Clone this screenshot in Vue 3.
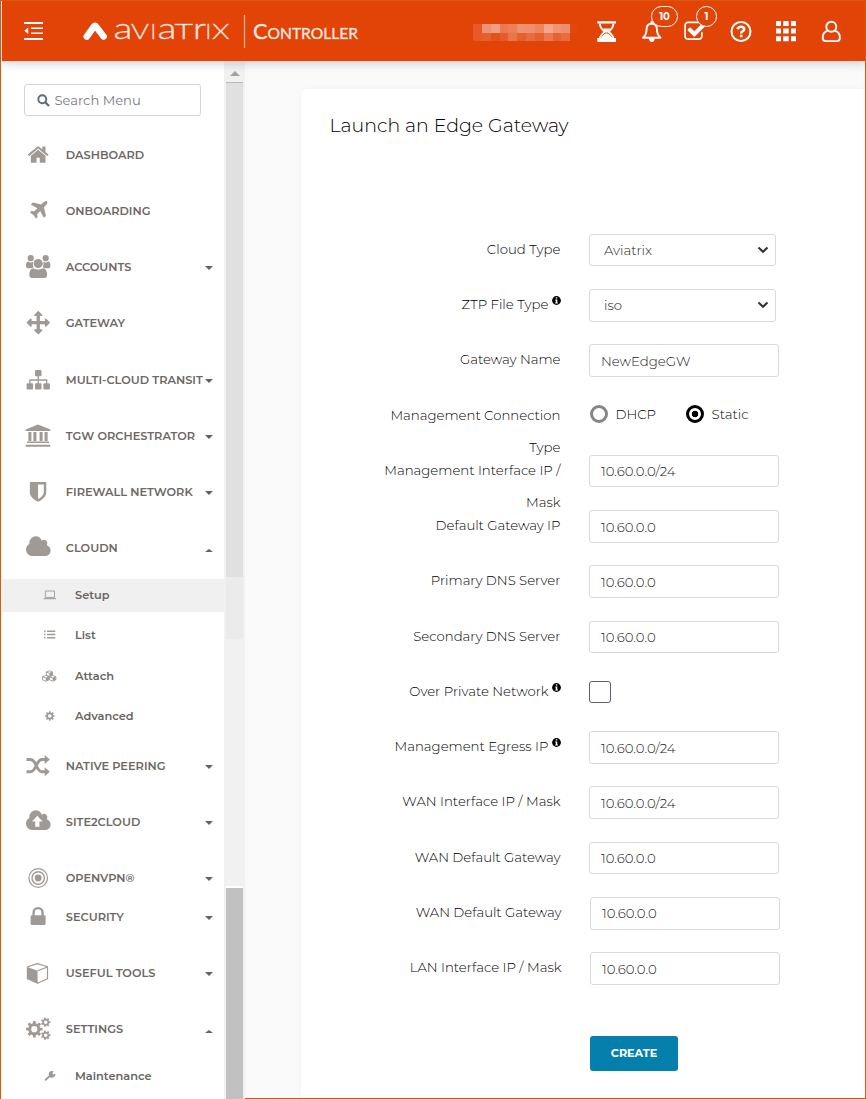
<script setup>
function gear(cx, cy, outer, inner, hole, teeth) {
  const pts = []
  const step = (Math.PI * 2) / teeth
  for (let i = 0; i < teeth; i++) {
    const a = i * step
    for (const [o, r] of [[-0.3, inner], [-0.21, outer], [0.21, outer], [0.3, inner]]) {
      const t = a + o * step
      pts.push(`${(cx + r * Math.cos(t)).toFixed(2)} ${(cy + r * Math.sin(t)).toFixed(2)}`)
    }
  }
  return `<path fill-rule="evenodd" d="M${pts.join('L')}ZM${cx - hole} ${cy}a${hole} ${hole} 0 1 0 ${hole * 2} 0a${hole} ${hole} 0 1 0 ${-hole * 2} 0Z"/>`
}

const cloudPath = '<path transform="translate(-.8 -1.600) scale(.0128 .014)" d="M1984 1152q0 159-112.500 271.500t-271.500 112.500h-1088q-185 0-316.500-131.500t-131.500-316.500q0-132 71-241.500t187-163.500q-2-28-2-43 0-212 150-362t362-150q158 0 286.500 88t187.500 230q70-62 166-62 106 0 181 75t75 181q0 75-41 138 129 30 213 134.500t84 239.500z"/>'

const icons = {
  home: '<path transform="translate(.8 .2) scale(.0127)" d="M1472 992v480q0 26-19 45t-45 19h-384v-384h-256v384h-384q-26 0-45-19t-19-45v-480q0-1 .5-3t.5-3l575-474 575 474q1 2 1 6zm223-69l-62 74q-8 9-21 11h-3q-13 0-21-7l-692-577-692 577q-12 8-24 7-13-2-21-11l-62-74q-8-10-7-23.500t11-21.500l719-599q32-26 76-26t76 26l244 204v-195q0-14 9-23t23-9h192q14 0 23 9t9 23v408l219 182q10 8 11 21.500t-7 23.500z"/>',
  plane: '<path transform="translate(1.800 .4) scale(.0123)" d="M1568 160q44 52 12 148t-108 172l-161 161 160 696q5 19-12 33l-128 96q-7 6-19 6-4 0-7-1-15-3-21-16l-279-508-259 259 53 194q5 17-8 31l-96 96q-9 9-23 9h-2q-15-2-24-13l-189-252-252-189q-11-7-13-23-1-13 9-25l96-97q9-9 23-9 6 0 8 1l194 53 259-259-508-279q-14-8-17-24-2-16 9-27l128-128q14-13 30-8l665 159 160-160q76-76 172-108t148 12z"/>',
  users: '<circle cx="4.700" cy="3.200" r="3.100"/><circle cx="19.700" cy="3.200" r="3.100"/><path d="M2 6.600q2.800 1.800 5.200.2Q6.300 9.200 7.500 12.400Q5.800 12.700 4.700 13.300H1.900Q0 13.300 0 10.800Q0 7.200 2 6.600ZM22.400 6.600q-2.800 1.800-5.200.2Q18.100 9.200 16.900 12.400Q18.600 12.700 19.700 13.300H22.500Q24.400 13.300 24.400 10.800Q24.400 7.200 22.400 6.600Z"/><circle cx="12.200" cy="8.500" r="4.500"/><path d="M7.200 13.200Q12.200 16 17.200 13.200Q21.100 13.600 21.100 20Q21.100 22.900 18.200 22.900H6.200Q3.300 22.900 3.300 20Q3.300 13.600 7.200 13.200Z"/>',
  arrows: '<path transform="translate(.7 .1) scale(.0129)" d="M1792 896q0 26-19 45l-256 256q-19 19-45 19t-45-19-19-45v-128h-384v384h128q26 0 45 19t19 45-19 45l-256 256q-19 19-45 19t-45-19l-256-256q-19-19-19-45t19-45 45-19h128v-384h-384v128q0 26-19 45t-45 19-45-19l-256-256q-19-19-19-45t19-45l256-256q19-19 45-19t45 19 19 45v128h384v-384h-128q-26 0-45-19t-19-45 19-45l256-256q19-19 45-19t45 19l256 256q19 19 19 45t-19 45-45 19h-128v384h384v-128q0-26 19-45t45-19 45 19l256 256q19 19 19 45z"/>',
  sitemap: '<rect x="9" y="2" width="6.500" height="6.200" rx="1"/><rect x=".6" y="15.200" width="6.500" height="6.300" rx="1"/><rect x="9" y="15.200" width="6.500" height="6.300" rx="1"/><rect x="17.400" y="15.200" width="6.500" height="6.300" rx="1"/><path d="M12.250 8v8M3.850 16v-4h16.800v4" fill="none" stroke="currentColor" stroke-width="1.300"/>',
  bank: '<path d="M12 .6L24.300 5.500V7H-.3V5.500ZM2.400 8h3v9h-3ZM7.400 8h3v9h-3ZM13.600 8h3v9h-3ZM18.600 8h3v9h-3ZM1 17.600H23V19H1ZM-.3 20.800H24.300V22.800H-.3Z"/>',
  shield: '<path transform="translate(.6 .3) scale(.0128)" d="M1344 960v-640h-448v1137q119-63 213-137 235-184 235-360zm192-768v768q0 86-33.500 170.500t-83 150-118 127.500-126.500 103-121 77.500-89.500 49.500-42.500 20q-12 6-26 6t-26-6q-16-7-42.500-20t-89.500-49.500-121-77.500-126.500-103-118-127.500-83-150-33.500-170.500v-768q0-26 19-45t45-19h1152q26 0 45 19t19 45z"/>',
  cloud: cloudPath,
  cloudUp: cloudPath + '<path fill="#fff" d="M11.300 5.800L16.600 11.400H13.400V16.800H9.200V11.400H6Z"/>',
  shuffle: '<path d="M.5 5.500H4.500C10.500 5.500 10 17.700 16 17.700H20M.5 17.700H4.500C10.500 17.700 10 5.500 16 5.500H20" fill="none" stroke="currentColor" stroke-width="2.900"/><path d="M18.700 1L23.800 5.500L18.700 10ZM18.700 13.200L23.800 17.700L18.700 22.200Z"/>',
  target: '<g fill="none" stroke="currentColor"><circle cx="12.200" cy="12" r="9.300" stroke-width="1.200"/><circle cx="12.200" cy="12" r="6.200" stroke-width="1.400"/></g><circle cx="12.200" cy="12" r="3.400"/>',
  lock: '<rect x="4.600" y="10.200" width="15" height="9.900" rx="1.300"/><path d="M7.600 11V7.600a4.500 4.500 0 0 1 9 0V11" fill="none" stroke="currentColor" stroke-width="2.400"/>',
  cube: '<path d="M11.600 2.600L21.500 5.800V17.700L11.600 22.300L1.400 17.700V5.800Z" fill="none" stroke="currentColor" stroke-width="1.200" stroke-linejoin="round"/><path d="M1.400 6L11.600 9.700V22.300L1.400 17.700Z"/><path d="M11.600 9.700L21.500 6" fill="none" stroke="currentColor" stroke-width="1.200"/>',
  cogs: gear(8.3, 12.2, 8.3, 6.1, 3.1, 8) + gear(19.7, 5.2, 4.8, 3.5, 1.8, 7) + gear(19.7, 18.2, 4.8, 3.5, 1.8, 7),
  laptop: '<path d="M8.300 8h9.200v6.400H8.300Z" fill="none" stroke="currentColor" stroke-width=".9"/><path d="M6.700 15.100h12.400v1.100H6.700Z"/>',
  list: '<path d="M7 7.600h1.500v1.600H7Zm3 0h8.300v1.400H10ZM7 10.800h1.500v1.500H7Zm3 0h8.300v1.400H10ZM7 14.100h1.500v1.500H7Zm3 0h8.300v1.400H10Z"/>',
  cubes: '<g fill="none" stroke="currentColor" stroke-width=".9" stroke-linejoin="round"><path d="M12.400 6.800l3.100 1.200v3l-3.100 1.400-3.100-1.400V8ZM9.300 8l3.100 1.300 3.100-1.300M8.900 11.500l3.200 1.300v3l-3.200 1.400-3.400-1.400v-3ZM5.500 12.800l3.400 1.300 3.200-1.300M15.700 11.500l3.200 1.300v3l-3.200 1.400-3.300-1.400v-3ZM12.400 12.800l3.300 1.300 3.200-1.300"/></g><path d="M12.400 9.300l2.900-1.300v3l-2.900 1.400ZM8.900 14.100l2.900-1.300v3l-2.900 1.400ZM15.700 14.100l2.900-1.300v3l-2.900 1.400Z"/>',
  cog: gear(12.8, 12, 4.9, 3.6, 1.8, 8),
  wrench: '<path d="M8.700 15.800L14.700 10" stroke="currentColor" stroke-width="1.900" stroke-linecap="round"/><path d="M18.300 9.600A3.300 3.300 0 1 1 14.900 7L16.700 7.300L15.200 8.900L16 10.200H17.300Z"/>',
}

const menu = [
  { text: 'DASHBOARD', icon: 'home' },
  { text: 'ONBOARDING', icon: 'plane' },
  { text: 'ACCOUNTS', icon: 'users', caret: 'down' },
  { text: 'GATEWAY', icon: 'arrows' },
  { text: 'MULTI-CLOUD TRANSIT', icon: 'sitemap', caret: 'down', mod: 'nudge' },
  { text: 'TGW ORCHESTRATOR', icon: 'bank', caret: 'down' },
  { text: 'FIREWALL NETWORK', icon: 'shield', caret: 'down' },
  { text: 'CLOUDN', icon: 'cloud', caret: 'up', children: [
    { text: 'Setup', icon: 'laptop', active: true },
    { text: 'List', icon: 'list' },
    { text: 'Attach', icon: 'cubes' },
    { text: 'Advanced', icon: 'cog' },
  ] },
  { text: 'NATIVE PEERING', icon: 'shuffle', caret: 'down' },
  { text: 'SITE2CLOUD', icon: 'cloudUp', caret: 'down' },
  { text: 'OPENVPN®', icon: 'target', caret: 'down' },
  { text: 'SECURITY', icon: 'lock', caret: 'down', mod: 'tuck' },
  { text: 'USEFUL TOOLS', icon: 'cube', caret: 'down' },
  { text: 'SETTINGS', icon: 'cogs', caret: 'up', children: [
    { text: 'Maintenance', icon: 'wrench' },
  ] },
]

const rows = [
  { lines: ['Cloud Type'], type: 'select', value: 'Aviatrix' },
  { lines: ['ZTP File Type'], info: true, type: 'select', value: 'iso' },
  { lines: ['Gateway Name'], type: 'input', value: 'NewEdgeGW' },
  { lines: ['Management Connection', 'Type'], type: 'radio' },
  { lines: ['Management Interface IP /', 'Mask'], type: 'input', value: '10.60.0.0/24' },
  { lines: ['Default Gateway IP'], type: 'input', value: '10.60.0.0' },
  { lines: ['Primary DNS Server'], type: 'input', value: '10.60.0.0' },
  { lines: ['Secondary DNS Server'], type: 'input', value: '10.60.0.0' },
  { lines: ['Over Private Network'], info: true, type: 'check' },
  { lines: ['Management Egress IP'], info: true, type: 'input', value: '10.60.0.0/24' },
  { lines: ['WAN Interface IP / Mask'], type: 'input', value: '10.60.0.0/24' },
  { lines: ['WAN Default Gateway'], type: 'input', value: '10.60.0.0' },
  { lines: ['WAN Default Gateway'], type: 'input', value: '10.60.0.0', shift: true },
  { lines: ['LAN Interface IP / Mask'], type: 'input', value: '10.60.0.0', shift: true },
]

const mosaic = [
  ['#e65a27', '#ee9376', '#f0a085', '#ea7a52', '#eb7f58', '#ee9172', '#ee9070', '#ec8660', '#f2a78c', '#ee9576', '#ed8f6e', '#e2470c'],
  ['#e65a27', '#e5602e', '#e4511b', '#e55c28', '#ea7548', '#e6602f', '#e86c40', '#e5602f', '#ea7850', '#e6622f', '#e86c3e', '#e24408'],
]
</script>

<template>
  <div class="app">
    <header class="top">
      <svg class="outdent" width="20" height="20" viewBox="0 0 20 20" fill="#fff">
        <path d="M0 1h19v1.900H0ZM7 6.500h12v1.400H7ZM7 11.500h12v1.400H7ZM0 17.100h19V19H0ZM4.200 6.500v6.600L.4 9.800Z" />
      </svg>
      <svg class="logo" width="280" height="56" viewBox="0 -10 280 56">
        <path d="M3.800 25.500L11 15.500Q12 14.200 13 15.500L20.600 25.500" fill="none" stroke="#fff" stroke-width="6.500" stroke-linecap="round" stroke-linejoin="round" />
        <g class="brand">
          <text x="30.500" y="28" font-size="30" textLength="19" lengthAdjust="spacingAndGlyphs">a</text>
          <text x="48" y="28" font-size="21.500" textLength="18" lengthAdjust="spacingAndGlyphs" class="up">v</text>
          <text x="67.500" y="28" font-size="21.500" class="up">i</text>
          <text x="74.500" y="28" font-size="30" textLength="19" lengthAdjust="spacingAndGlyphs">a</text>
          <text x="91.500" y="28" font-size="21.500" textLength="18.500" lengthAdjust="spacingAndGlyphs" class="up">t</text>
          <text x="110" y="28" font-size="30" textLength="13" lengthAdjust="spacingAndGlyphs">r</text>
          <text x="122.500" y="28" font-size="21.500" class="up">i</text>
          <text x="129" y="28" font-size="21.500" textLength="17.500" lengthAdjust="spacingAndGlyphs" class="up">x</text>
        </g>
        <path d="M161.500 4v33" stroke="#fff" stroke-opacity=".55" stroke-width="1.300" />
        <text class="product" x="170" y="28" textLength="105" lengthAdjust="spacingAndGlyphs">Controller</text>
      </svg>
      <svg class="mosaic" width="106" height="17" viewBox="0 0 108 17" preserveAspectRatio="none" shape-rendering="crispEdges">
        <template v-for="(line, y) in mosaic" :key="y">
          <rect v-for="(c, x) in line" :key="x" :x="x * 9" :y="y * 9" width="9" height="9" :fill="c" />
        </template>
      </svg>
      <div class="tools">
        <svg width="22" height="24" viewBox="0 0 22 24" fill="#fff">
          <path d="M1.300 1.300h18.700v2.300H1.300ZM1.300 18h18.700v3.900H1.300Z" />
          <path d="M3.900 3.500C3.900 8 6.500 10 9 11.700C6.500 13.400 3.900 15.500 3.900 19M17.400 3.500C17.400 8 14.800 10 12.300 11.700C14.800 13.400 17.400 15.500 17.400 19" fill="none" stroke="#fff" stroke-width="1.900" />
          <path d="M10.650 13.200C13.300 14 15.500 16 16.500 18.500H4.800C5.800 16 8 14 10.650 13.200ZM7 8.500h7.300L10.650 13Z" />
        </svg>
        <div class="slot bell">
          <svg width="22" height="24" viewBox="0 0 22 24">
            <path d="M2 17.700C4.800 15.200 5.600 12.700 5.600 8.900Q5.600 4.100 10.700 3.500Q15.900 4.100 15.900 8.900C15.900 12.700 16.600 15.200 19.500 17.700Z" fill="none" stroke="#fff" stroke-width="1.900" stroke-linejoin="round" />
            <path d="M7.800 18.200h6q-.3 3.700-3 3.700T7.800 18.200ZM9.600 1.200h2.300v2.500H9.600Z" fill="#fff" />
          </svg>
          <span class="badge wide">10</span>
        </div>
        <div class="slot check">
          <svg width="22" height="24" viewBox="0 0 22 24" fill="#fff">
            <path transform="translate(-.6 -.1) scale(.0131)" d="M1472 930v318q0 119-84.500 203.500t-203.500 84.500h-832q-119 0-203.500-84.500t-84.500-203.500v-832q0-119 84.500-203.500t203.500-84.500h832q63 0 117 25 15 7 18 23 3 17-9 29l-49 49q-10 10-23 10-3 0-9-2-23-6-45-6h-832q-66 0-113 47t-47 113v832q0 66 47 113t113 47h832q66 0 113-47t47-113v-254q0-13 9-22l64-64q10-10 23-10 6 0 12 3 20 8 20 29zm231-489l-814 814q-24 24-57 24t-57-24l-430-430q-24-24-24-57t24-57l110-110q24-24 57-24t57 24l263 263 647-647q24-24 57-24t57 24l110 110q24 24 24 57t-24 57z" />
          </svg>
          <span class="badge">1</span>
        </div>
        <svg class="help" width="22" height="24" viewBox="0 0 22 24" fill="none" stroke="#fff">
          <circle cx="11" cy="11.500" r="9.500" stroke-width="2" />
          <path d="M7.300 9.100Q8.500 6.700 11 6.700Q14.200 6.700 14.200 9.100Q14.200 10.500 12.500 11.400Q11.200 12.100 11.200 13.400" stroke-width="2.500" />
          <path d="M11.200 14.700v2.600" stroke-width="2.600" />
        </svg>
        <svg class="apps" width="22" height="24" viewBox="0 0 22 24" fill="#fff">
          <path d="M1 1h5v5H1ZM8.200 1h5.500v5H8.200ZM16 1h5v5h-5ZM1 8.600h5v5H1ZM8.200 8.600h5.500v5H8.200ZM16 8.600h5v5h-5ZM1 16.200h5v5H1ZM8.200 16.200h5.500v5H8.200ZM16 16.200h5v5h-5Z" />
        </svg>
        <svg class="user" width="22" height="24" viewBox="0 0 22 24" fill="none" stroke="#fff" stroke-width="1.900">
          <circle cx="11.300" cy="6.800" r="5" />
          <path d="M7.500 10.800Q2.700 12 2.700 17.800Q2.700 21.100 5.700 21.100H16.900Q19.900 21.100 19.900 17.800Q19.900 12 15.100 10.800" />
        </svg>
      </div>
    </header>

    <div class="body">
      <aside class="side">
        <div class="search">
          <svg width="13" height="13" viewBox="0 0 13 13" fill="none" stroke="#5f6b76">
            <circle cx="5.300" cy="5.300" r="4" stroke-width="1.900" />
            <path d="M8.300 8.300L12 12" stroke-width="2.300" />
          </svg>
          <span>Search Menu</span>
        </div>
        <nav>
          <template v-for="m in menu" :key="m.text">
            <div class="item" :class="m.mod">
              <svg class="ico" width="24" height="24" viewBox="0 0 24 24" v-html="icons[m.icon]" />
              <span>{{ m.text }}</span>
              <i v-if="m.caret" class="caret" :class="m.caret"></i>
            </div>
            <div v-if="m.children" class="sub">
              <div v-for="s in m.children" :key="s.text" class="subitem" :class="{ active: s.active }">
                <svg class="ico" width="24" height="24" viewBox="0 0 24 24" v-html="icons[s.icon]" />
                <span>{{ s.text }}</span>
              </div>
            </div>
          </template>
        </nav>
      </aside>

      <div class="track">
        <i class="arrow"></i>
        <div class="thumb"></div>
        <div class="ghost"></div>
        <div class="thumb2"></div>
      </div>

      <main>
        <section class="card">
          <h1>Launch an Edge Gateway</h1>
          <div class="form">
            <div v-for="(r, i) in rows" :key="i" class="row" :class="{ shift: r.shift }">
              <label>
                <span v-for="l in r.lines" :key="l" class="line">
                  <span>{{ l }}</span>
                  <svg v-if="r.info" class="info" width="9" height="9" viewBox="0 0 9 9">
                    <circle cx="4.500" cy="4.500" r="4.400" />
                    <path d="M3.800 1.300h1.500v1.300H3.800ZM3.200 3.500h2.100v3h.6v1H3.200v-1h.6v-2h-.6Z" fill="#fff" />
                  </svg>
                </span>
              </label>
              <div v-if="r.type === 'select'" class="field select">
                <span>{{ r.value }}</span>
                <svg width="12" height="8" viewBox="0 0 12 8"><path d="M1.500 1.500L6 5.800L10.500 1.500" fill="none" stroke="#333" stroke-width="2.100" /></svg>
              </div>
              <div v-else-if="r.type === 'input'" class="field"><span>{{ r.value }}</span></div>
              <div v-else-if="r.type === 'radio'" class="radios">
                <span class="opt"><i class="radio"></i>DHCP</span>
                <span class="opt"><i class="radio on"></i>Static</span>
              </div>
              <div v-else class="box"></div>
            </div>
          </div>
          <button class="create">CREATE</button>
        </section>
      </main>
    </div>
  </div>
</template>

<style>
body { background: #fff; }
</style>

<style scoped>
* { box-sizing: border-box; }
.app {
  width: 866px; height: 1099px; overflow: hidden; display: flex; flex-direction: column;
  border: 1px solid #d55a0c; border-bottom: 0; padding-left: 1px;
  font-family: Montserrat, Inter, "Liberation Sans", sans-serif; background: #fff;
}
.top {
  height: 60px; flex: none; display: flex; background: #e24408; position: relative; z-index: 2;
  box-shadow: 0 2px 9px rgba(60, 80, 110, .28);
}
.outdent { margin: 20px 0 0 22px; flex: none; }
.logo { margin: 0 0 0 39px; flex: none; }
.brand { fill: #fff; fill-opacity: .85; stroke: #fff; stroke-opacity: .6; stroke-width: .4; font-family: Lato, sans-serif; font-weight: 300; }
.up { text-transform: uppercase; }
.product { fill: #fff; fill-opacity: .9; stroke: #fff; stroke-opacity: .5; stroke-width: .5; font: 400 21px Lato, sans-serif; font-variant-caps: small-caps; }
.mosaic { margin: 23px 0 0 110px; flex: none; }
.tools { display: flex; margin: 18px 0 0 17px; height: 26px; align-items: center; flex: none; }
.tools svg { display: block; flex: none; }
.slot { position: relative; }
.bell { margin-left: 23px; }
.check { margin-left: 21px; }
.help { margin-left: 24px; }
.apps { margin-left: 23px; }
.user { margin-left: 23px; }
.badge {
  position: absolute; left: 12px; top: -14px; height: 21px; width: 21px; border: 1px solid #fff; border-radius: 10.500px;
  background: #e24408; color: #fff; font-size: 10px; font-weight: 700; line-height: 19px; text-align: center;
}
.badge.wide { width: 27px; left: 10px; }
.body { flex: 1; display: flex; min-height: 0; }
.side { width: 222px; flex: none; }
.search {
  margin: 23px 0 0 22px; width: 177px; height: 32px; border: 1px solid #d3d6d9; border-radius: 3px;
  display: flex; align-items: center; padding-left: 12px; gap: 4.500px; font-size: 13.120px; color: #737b83; white-space: nowrap;
}
nav { margin-top: 11px; color: #6d6863; font-weight: 600; font-size: 11.370px; white-space: nowrap; }
.item { height: 56px; display: flex; align-items: center; padding-left: 24.400px; position: relative; }
.nudge { margin-top: 1px; }
.tuck { margin-top: -17px; }
.ico { color: #9f9a96; fill: currentColor; overflow: visible; flex: none; }
.item .ico { margin-right: 15.400px; }
.caret { position: absolute; left: 203px; top: 27px; border: 4px solid transparent; border-bottom: 0; border-top-color: #67625e; border-top-width: 4px; }
.caret.up { border: 4px solid transparent; border-top: 0; border-bottom-color: #67625e; border-bottom-width: 3px; top: 29px; }
.sub { padding: 3px 0 5px; display: flex; flex-direction: column; gap: 7.400px; color: #6a6561; }
.subitem { height: 33px; display: flex; align-items: center; padding: 0 0 .8px 35px; }
.subitem .ico { margin-right: 14px; }
.active { background: #f0f0f0; }
.track { width: 21px; flex: none; background: #f1f1f1; padding: 10px 2px 0; }
.arrow { display: block; width: 0; margin: 0 auto; border: 5px solid transparent; border-top: 0; border-bottom-color: #a3a3a3; }
.thumb { margin-top: 6px; height: 495px; background: #e0e0e0; border-top: 1px solid #b9b9b9; }
.ghost { height: 62px; background: #ebebeb; }
.thumb2 { margin-top: 247px; height: 213px; border-top: 2px solid #fff; background: #c1c1c1; width: 17px; }
main { flex: 1; background: #fafafa; padding: 28px 0 0 56px; border-bottom: 1px solid #d55a0c; }
.card { height: 100%; background: #fff; border-radius: 5px 0 0 0; box-shadow: 0 0 8px rgba(0, 0, 0, .035); }
h1 { margin: 0; padding: 25px 0 0 28.500px; height: 144.820px; font-size: 18.950px; line-height: 24px; font-weight: 300; color: #000; white-space: nowrap; }
.form { display: grid; grid-auto-rows: 55.270px; font-size: 13.280px; font-weight: 300; color: #000; white-space: nowrap; }
.row { display: flex; align-items: flex-start; height: 32.600px; }
.shift { padding-left: 1px; }
label { width: 259.500px; margin: -1px 28.500px 0 0; flex: none; display: block; }
.line { display: flex; justify-content: flex-end; line-height: 32px; height: 32px; }
.info { margin: 12px 0 0 3px; flex: none; transform: translateY(-4px); }
.field { width: 190px; height: 32.600px; border: 1px solid #d9d9d9; border-radius: 3px; padding-left: 11px; display: flex; align-items: center; color: #222; }
.field span { padding-top: .2px; }
.select { width: 187px; justify-content: space-between; padding: 0 6px 0 14px; }
.radios { display: flex; align-items: center; height: 29px; gap: 29px; }
.opt { display: flex; align-items: center; }
.radio { width: 18px; height: 18px; margin: 0 7.500px 0 1px; border: 3px solid #858585; border-radius: 50%; flex: none; }
.radio.on { border-color: #000; background: radial-gradient(circle, #000 3px, #fff 3.600px); }
.box { width: 22px; height: 22px; margin-top: 5px; border: 1px solid #59626c; border-radius: 3px; }
.create {
  display: flex; align-items: center; justify-content: center; margin: 28px 0 0 289px; width: 88px; height: 35px; padding: 0;
  border: 0; border-radius: 3px; background: #0580ad; color: #fff; font: 700 11.200px Montserrat, Inter, sans-serif;
}
</style>
